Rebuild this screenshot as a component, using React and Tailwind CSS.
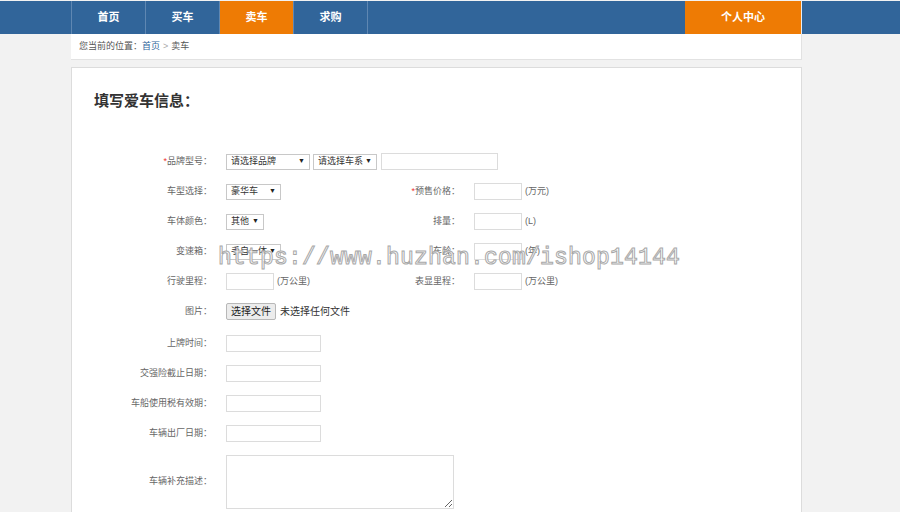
const font = { fontFamily: '"Liberation Sans", "Noto Sans CJK SC", sans-serif' };

function Select({ text, w }) {
  return (
    <div
      className={`h-[16px] ${w} border border-[#c8c8c8] bg-white flex items-center justify-between pl-[4px] pr-[4px] text-[9px] text-[#333]`}
    >
      <span>{text}</span>
      <span className="text-[7px] text-[#222]">▼</span>
    </div>
  );
}

function Input({ w = "w-[48px]", h = "h-[17px]" }) {
  return <div className={`${h} ${w} border border-[#dcdcdc] bg-white`} />;
}

function Label({ children, req, w = "w-[141px]" }) {
  return (
    <div className={`${w} shrink-0 text-right text-[9px] text-[#666] pr-[1px]`}>
      {req && <span className="text-[#e33]">*</span>}
      {children}：
    </div>
  );
}

function Row({ label, req, children, right, mb = "mb-[13px]" }) {
  return (
    <div className={`flex items-center ${mb}`}>
      <Label req={req}>{label}</Label>
      <div className="ml-[13px] w-[175px] flex items-center">{children}</div>
      {right && (
        <>
          <Label req={right.req} w="w-[60px]">
            {right.label}
          </Label>
          <div className="ml-[13px] flex items-center">
            <Input />
            <span className="ml-[3px] text-[9px] text-[#666]">{right.unit}</span>
          </div>
        </>
      )}
    </div>
  );
}

export default function App() {
  const navItems = ["首页", "买车", "卖车", "求购"];
  return (
    <div className="relative min-h-[512px] bg-[#f2f2f2] pt-[1px]" style={font}>
      <div className="h-[33px] bg-[#31659a]">
        <div className="ml-[71px] w-[731px] h-full flex border-l border-[#5f87b2]">
          {navItems.map((n) => (
            <div
              key={n}
              className={`w-[74px] h-full flex items-center justify-center text-[11px] font-bold text-white border-r border-[#5f87b2] ${
                n === "卖车" ? "bg-[#ee7b04]" : ""
              }`}
            >
              {n}
            </div>
          ))}
          <div className="flex-1" />
          <div className="w-[117px] h-full flex items-center justify-center bg-[#ee7b04] text-[11px] font-bold text-white border-r border-[#e6eef6]">
            个人中心
          </div>
        </div>
      </div>

      <div className="ml-[71px] w-[731px]">
        <div className="h-[26px] bg-white border-b border-[#e2e2e2] border-r flex items-center pl-[8px] text-[9px] text-[#555]">
          您当前的位置：<span className="text-[#31659a]">首页</span>
          <span className="mx-[3px] text-[#aaa]">&gt;</span>卖车
        </div>

        <div className="mt-[7px] bg-white border border-[#dcdcdc] pt-[23px] h-[460px]">
          <h1 className="ml-[22px] text-[15px] font-bold text-[#333] leading-[20px]">
            填写爱车信息：
          </h1>

          <div className="mt-[42px]">
            <Row label="品牌型号" req>
              <div className="flex gap-[3px] items-center">
                <Select text="请选择品牌" w="w-[84px]" />
                <Select text="请选择车系" w="w-[64px]" />
                <div className="ml-[1px] h-[17px] w-[117px] border border-[#dcdcdc]" />
              </div>
            </Row>
            <Row label="车型选择" right={{ label: "预售价格", req: true, unit: "(万元)" }}>
              <Select text="豪华车" w="w-[55px]" />
            </Row>
            <Row label="车体颜色" right={{ label: "排量", unit: "(L)" }}>
              <Select text="其他" w="w-[38px]" />
            </Row>
            <Row label="变速箱" right={{ label: "车龄", unit: "(年)" }}>
              <Select text="手自一体" w="w-[55px]" />
            </Row>
            <Row label="行驶里程" right={{ label: "表显里程", unit: "(万公里)" }}>
              <Input />
              <span className="ml-[3px] text-[9px] text-[#666]">(万公里)</span>
            </Row>
            <Row label="图片" mb="mb-[15px]">
              <div className="flex items-center whitespace-nowrap">
                <div className="h-[17px] px-[4px] flex items-center bg-[#ececec] border border-[#b8b8b8] rounded-[2px] text-[10px] text-[#222]">
                  选择文件
                </div>
                <span className="ml-[4px] text-[10px] text-[#333]">未选择任何文件</span>
              </div>
            </Row>
            {["上牌时间", "交强险截止日期", "车船使用税有效期", "车辆出厂日期"].map((l) => (
              <Row key={l} label={l}>
                <Input w="w-[95px]" />
              </Row>
            ))}
            <div className="flex items-center mt-[7px]">
              <Label>车辆补充描述</Label>
              <textarea className="ml-[13px] w-[228px] h-[54px] border border-[#dcdcdc] bg-white outline-none" />
            </div>
          </div>
        </div>
      </div>

      <div
        className="absolute left-[218px] top-[243px] text-[23px] leading-[30px] text-white whitespace-nowrap pointer-events-none"
        style={{
          fontFamily: '"Liberation Mono", monospace',
          WebkitTextStroke: "1px #a8a8a8",
          letterSpacing: "0.2px",
        }}
      >
        https://www.huzhan.com/ishop14144
      </div>
    </div>
  );
}
